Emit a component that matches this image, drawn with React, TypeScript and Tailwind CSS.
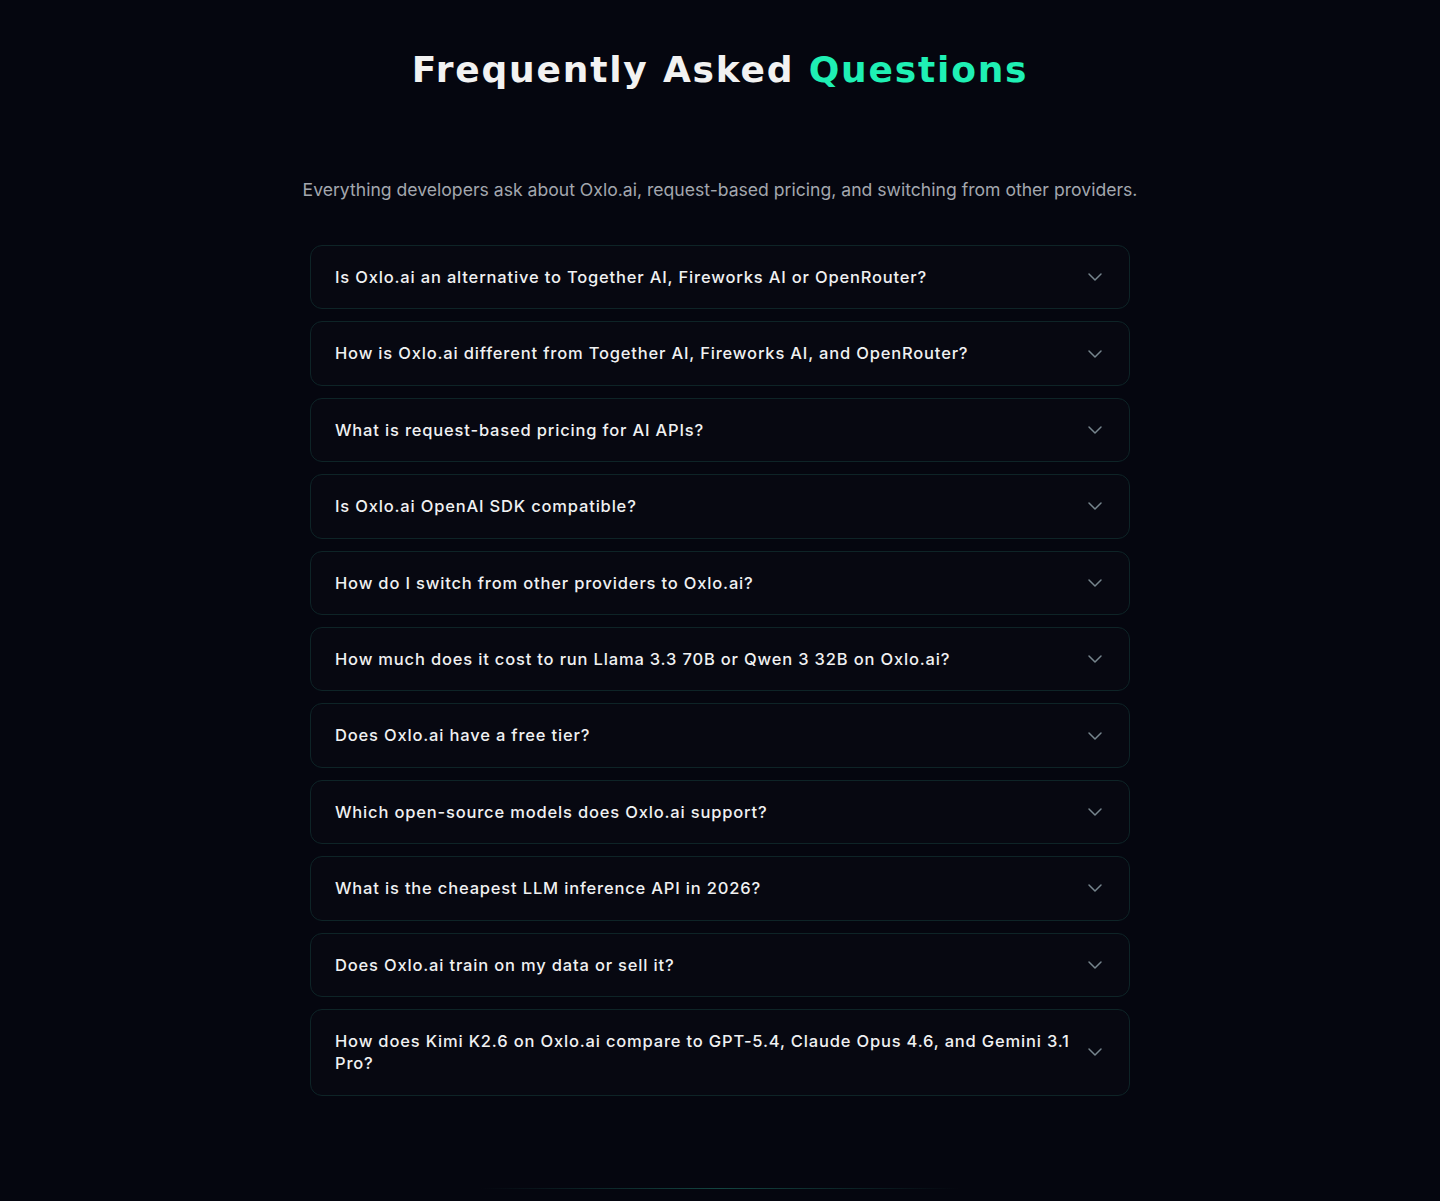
import { ChevronDown } from 'lucide-react'

const questions = [
  'Is Oxlo.ai an alternative to Together AI, Fireworks AI or OpenRouter?',
  'How is Oxlo.ai different from Together AI, Fireworks AI, and OpenRouter?',
  'What is request-based pricing for AI APIs?',
  'Is Oxlo.ai OpenAI SDK compatible?',
  'How do I switch from other providers to Oxlo.ai?',
  'How much does it cost to run Llama 3.3 70B or Qwen 3 32B on Oxlo.ai?',
  'Does Oxlo.ai have a free tier?',
  'Which open-source models does Oxlo.ai support?',
  'What is the cheapest LLM inference API in 2026?',
  'Does Oxlo.ai train on my data or sell it?',
  'How does Kimi K2.6 on Oxlo.ai compare to GPT-5.4, Claude Opus 4.6, and Gemini 3.1 Pro?',
]

export default function App() {
  return (
    <div className="min-h-[1201px] bg-[#05060f] font-['Inter',sans-serif]">
      <section className="pt-[46px]">
        <h2 className="text-center font-['DejaVu_Sans',sans-serif] text-[36px] leading-[48px] font-bold tracking-[0.05em] text-[#f2f2f2]">
          Frequently Asked <span className="text-[#1ff0b4]">Questions</span>
        </h2>

        <p className="mt-[82px] text-center text-[17.6px] leading-[28px] text-[#a3a7ae]">
          Everything developers ask about Oxlo.ai, request-based pricing, and switching from other providers.
        </p>

        <div className="mx-auto mt-[41px] flex w-[820px] flex-col gap-3">
          {questions.map((q) => (
            <button
              key={q}
              className="flex w-full items-center justify-between gap-2 rounded-xl border border-[#0e2427] bg-[#070811] py-5 pr-[22px] pl-6 text-left"
            >
              <span className="flex-1 text-[16.5px] leading-[22.4px] font-medium tracking-[0.05em] text-[#f0f1f2]">
                {q}
              </span>
              <ChevronDown className="-my-1 h-6 w-6 shrink-0 text-[#76858d]" strokeWidth={1.5} />
            </button>
          ))}
        </div>
      </section>

      {/* faint divider into the next section */}
      <div className="mx-auto mt-[92px] h-px w-[480px] bg-gradient-to-r from-transparent via-[#134541] to-transparent" />
    </div>
  )
}
